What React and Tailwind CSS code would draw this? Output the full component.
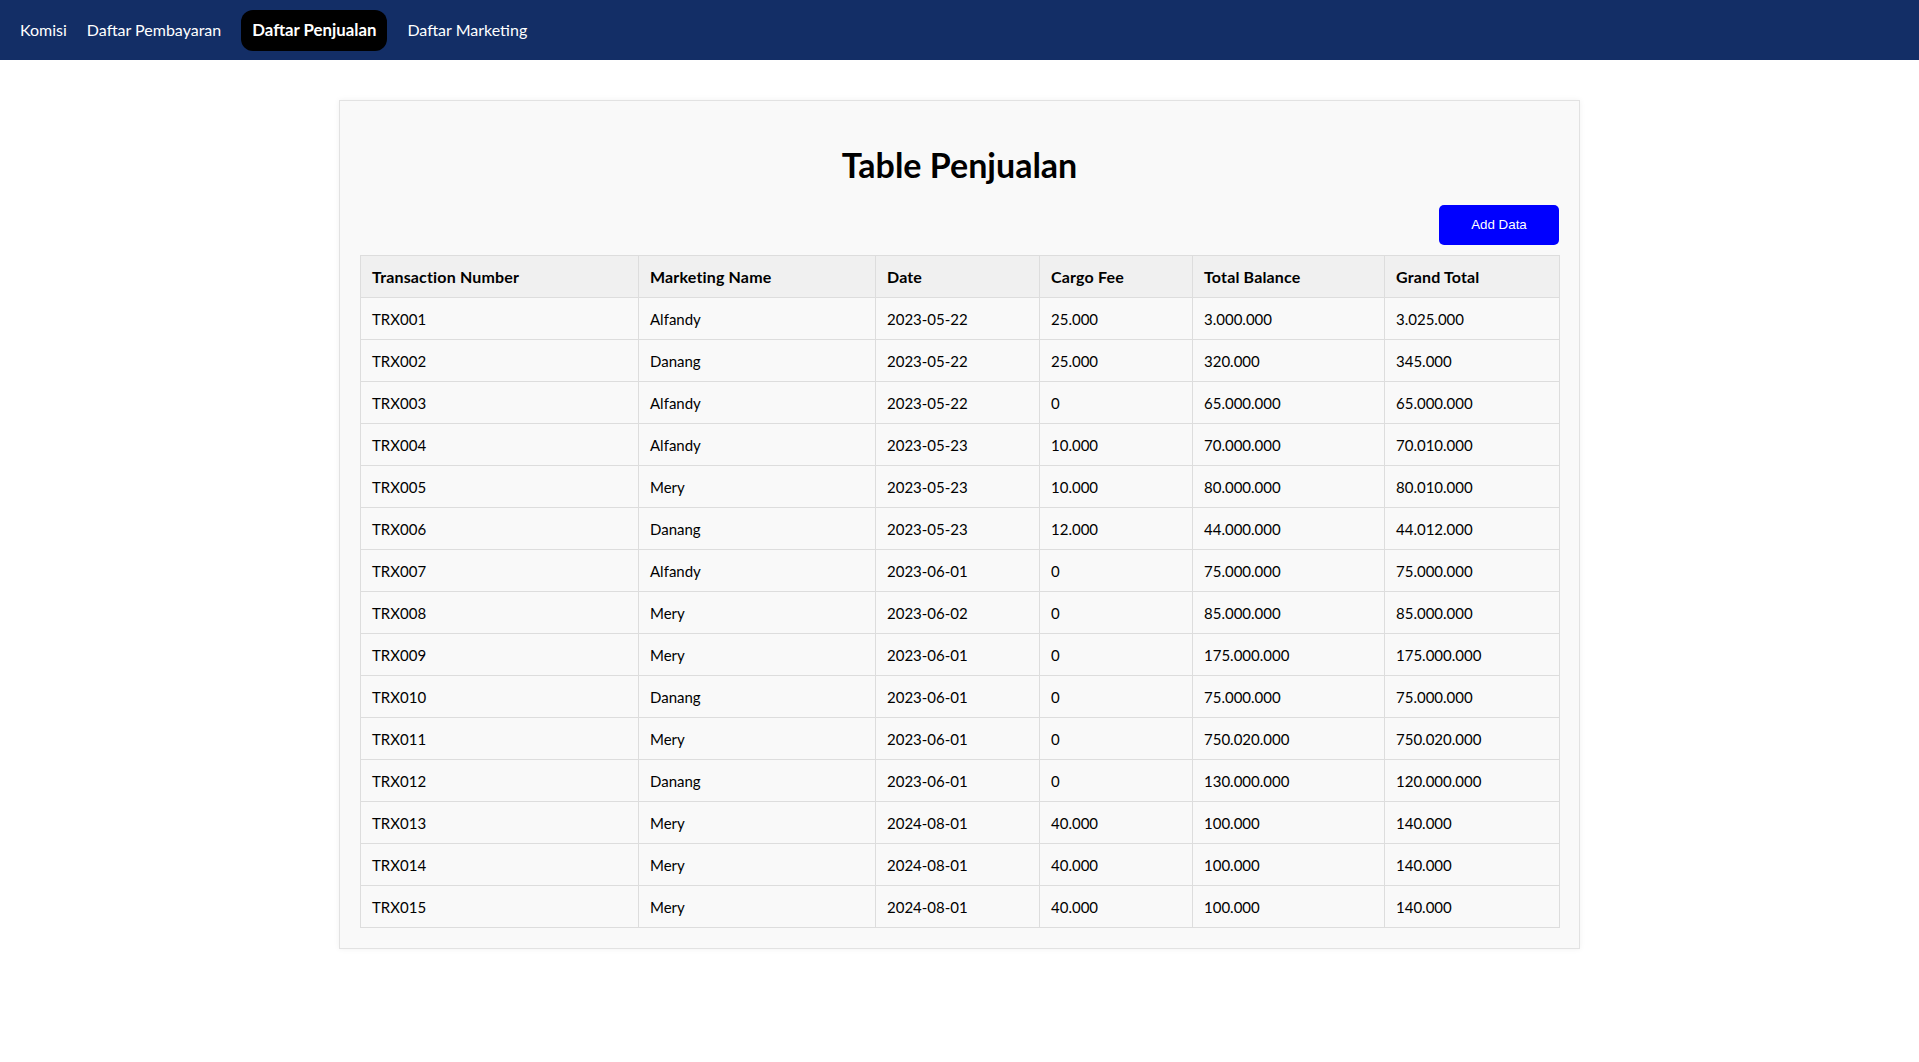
const NAV = ['Komisi', 'Daftar Pembayaran', 'Daftar Penjualan', 'Daftar Marketing'];

const ROWS = [
  ['TRX001', 'Alfandy', '2023-05-22', '25.000', '3.000.000', '3.025.000'],
  ['TRX002', 'Danang', '2023-05-22', '25.000', '320.000', '345.000'],
  ['TRX003', 'Alfandy', '2023-05-22', '0', '65.000.000', '65.000.000'],
  ['TRX004', 'Alfandy', '2023-05-23', '10.000', '70.000.000', '70.010.000'],
  ['TRX005', 'Mery', '2023-05-23', '10.000', '80.000.000', '80.010.000'],
  ['TRX006', 'Danang', '2023-05-23', '12.000', '44.000.000', '44.012.000'],
  ['TRX007', 'Alfandy', '2023-06-01', '0', '75.000.000', '75.000.000'],
  ['TRX008', 'Mery', '2023-06-02', '0', '85.000.000', '85.000.000'],
  ['TRX009', 'Mery', '2023-06-01', '0', '175.000.000', '175.000.000'],
  ['TRX010', 'Danang', '2023-06-01', '0', '75.000.000', '75.000.000'],
  ['TRX011', 'Mery', '2023-06-01', '0', '750.020.000', '750.020.000'],
  ['TRX012', 'Danang', '2023-06-01', '0', '130.000.000', '120.000.000'],
  ['TRX013', 'Mery', '2024-08-01', '40.000', '100.000', '140.000'],
  ['TRX014', 'Mery', '2024-08-01', '40.000', '100.000', '140.000'],
  ['TRX015', 'Mery', '2024-08-01', '40.000', '100.000', '140.000'],
];

const HEADERS = ['Transaction Number', 'Marketing Name', 'Date', 'Cargo Fee', 'Total Balance', 'Grand Total'];
const COL_W = ['w-[278px]', 'w-[237px]', 'w-[164px]', 'w-[153px]', 'w-[192px]', 'w-[175px]'];

export default function App() {
  return (
    <div className="min-h-screen bg-white text-black font-['Lato','Noto_Sans',sans-serif]">
      <nav className="h-[60px] bg-[#132e66] flex items-center gap-5 px-5 text-[16px] text-white">
        {NAV.map((item) => (
          item === 'Daftar Penjualan' ? (
            <span key={item} className="h-[41px] px-[11px] flex items-center rounded-xl bg-black font-bold text-[16.8px]">
              {item}
            </span>
          ) : (
            <span key={item}>{item}</span>
          )
        ))}
      </nav>

      <div className="mt-10 mx-auto w-[1241px] bg-[#f9f9f9] border border-[#e2e2e2] shadow-[0_0_6px_rgba(0,0,0,0.06)] p-5">
        <h1 className="mt-[23px] text-center text-[34px] leading-[42px] font-bold">Table Penjualan</h1>

        <div className="mt-[19px] flex justify-end">
          <button className="w-[120px] h-[40px] rounded-[5px] bg-[#0000ff] text-white text-[13.33px] font-['Liberation_Sans',Arial,sans-serif]">
            Add Data
          </button>
        </div>

        <table className="mt-[10px] w-[1199px] table-fixed border-collapse text-[15px]">
          <colgroup>
            {COL_W.map((w, i) => <col key={i} className={w} />)}
          </colgroup>
          <thead>
            <tr className="h-[42px] bg-[#f0f0f0]">
              {HEADERS.map((h) => (
                <th key={h} className="border border-[#dddddd] px-[11px] pt-px text-left text-[16px] tracking-[0.01em] font-bold">{h}</th>
              ))}
            </tr>
          </thead>
          <tbody>
            {ROWS.map((row) => (
              <tr key={row[0]} className="h-[42px]">
                {row.map((cell, i) => (
                  <td key={i} className="border border-[#dddddd] px-[11px] pt-px">{cell}</td>
                ))}
              </tr>
            ))}
          </tbody>
        </table>
      </div>
    </div>
  );
}
